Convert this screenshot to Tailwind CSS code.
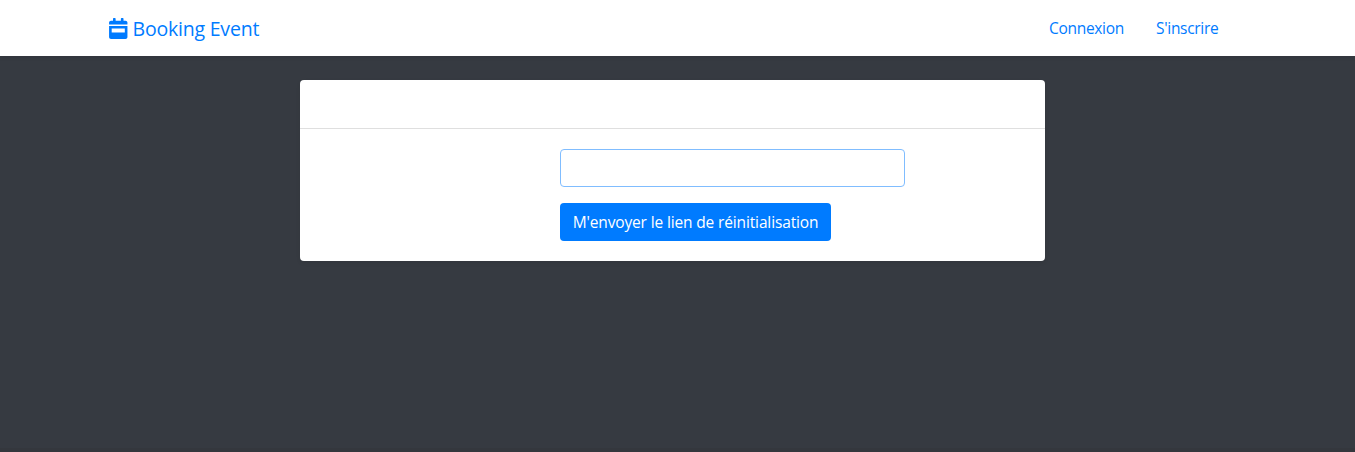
<!DOCTYPE html>
<html lang="fr">
<head>
<meta charset="utf-8">
<title>Booking Event</title>
<script src="https://cdn.jsdelivr.net/npm/@tailwindcss/browser@4"></script>
</head>
<body class="flex h-screen flex-col overflow-hidden bg-[#363a41] font-['Open_Sans','Noto_Sans',sans-serif] text-base">
  <nav class="flex h-14 shrink-0 items-center justify-between bg-white pr-[136px] pl-[109px] text-[#007bff] shadow-[0_2px_4px_rgba(0,0,0,0.075)]">
    <a href="#" class="flex items-center gap-[5px]">
      <svg class="h-[21px] w-[18.500px]" viewBox="0 0 448 512" fill="currentColor" aria-hidden="true"><path d="M0 464c0 26.500 21.500 48 48 48h352c26.500 0 48-21.500 48-48V192H0v272zm64-208h320v96H64v-96zM400 64h-48V16c0-8.800-7.200-16-16-16h-32c-8.800 0-16 7.200-16 16v48H160V16c0-8.800-7.200-16-16-16h-32c-8.800 0-16 7.200-16 16v48H48C21.500 64 0 85.500 0 112v48h448v-48c0-26.500-21.500-48-48-48z" fill-rule="evenodd"/></svg>
      <span class="pt-px text-[19.500px] leading-[30px] tracking-[-0.2px]">Booking Event</span>
    </a>
    <div class="flex gap-8 text-[15.500px] leading-6 tracking-[-0.300px]">
      <a href="#" class="w-[76px] pl-px whitespace-nowrap">Connexion</a>
      <a href="#" class="w-[63px] whitespace-nowrap">S'inscrire</a>
    </div>
  </nav>
  <main class="grow pt-6 pl-[300px]">
    <section class="h-[181px] w-[745px] rounded bg-white shadow-[0_2px_4px_rgba(0,0,0,0.075)]">
      <div class="h-[49px] border-b border-[#dfdfdf]"></div>
      <form class="flex flex-col items-start gap-4 pt-5 pl-[260px]">
        <input type="email" aria-label="Adresse e-mail" class="h-[38px] w-[345px] rounded border border-[#80bdff] bg-white px-3 outline-none">
        <button type="button" class="h-[38px] w-[271px] rounded bg-[#007bff] text-[15.500px] leading-6 tracking-[-0.140px] whitespace-nowrap text-white">M'envoyer le lien de réinitialisation</button>
      </form>
    </section>
  </main>
  <footer class="h-1 shrink-0 bg-[#34373d]"></footer>
</body>
</html>
